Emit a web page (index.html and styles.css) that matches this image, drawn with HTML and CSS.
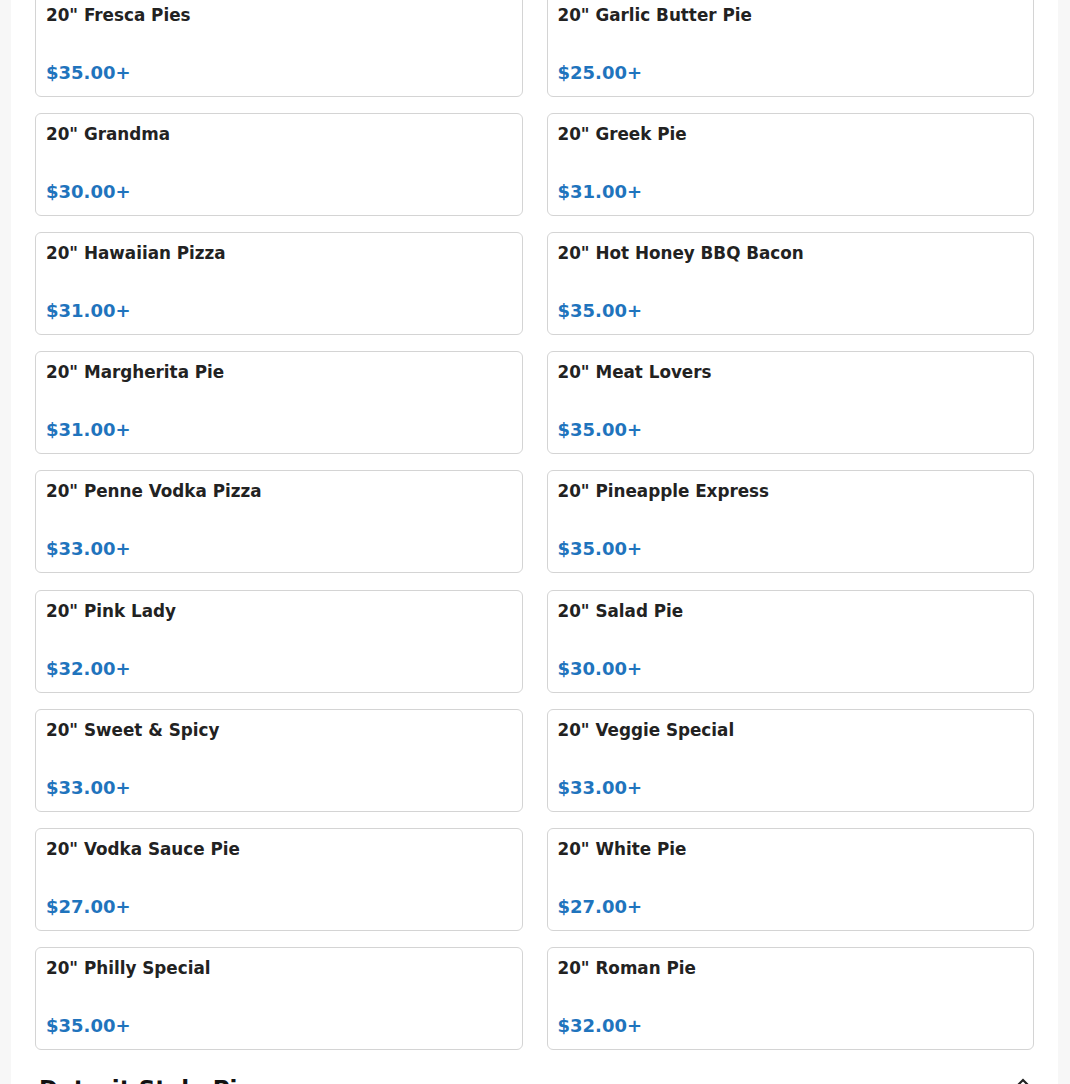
FILE: index.html
```html
<!DOCTYPE html>
<html>
<head>
<meta charset="utf-8">
<link rel="stylesheet" href="styles.css">
</head>
<body>
<div class="page">
  <div class="grid">
    <div class="card"><div class="name">20" Fresca Pies</div><div class="price">$35.00+</div></div>
    <div class="card"><div class="name">20" Garlic Butter Pie</div><div class="price">$25.00+</div></div>
    <div class="card"><div class="name">20" Grandma</div><div class="price">$30.00+</div></div>
    <div class="card"><div class="name">20" Greek Pie</div><div class="price">$31.00+</div></div>
    <div class="card"><div class="name">20" Hawaiian Pizza</div><div class="price">$31.00+</div></div>
    <div class="card"><div class="name">20" Hot Honey BBQ Bacon</div><div class="price">$35.00+</div></div>
    <div class="card"><div class="name">20" Margherita Pie</div><div class="price">$31.00+</div></div>
    <div class="card"><div class="name">20" Meat Lovers</div><div class="price">$35.00+</div></div>
    <div class="card"><div class="name">20" Penne Vodka Pizza</div><div class="price">$33.00+</div></div>
    <div class="card"><div class="name">20" Pineapple Express</div><div class="price">$35.00+</div></div>
    <div class="card"><div class="name">20" Pink Lady</div><div class="price">$32.00+</div></div>
    <div class="card"><div class="name">20" Salad Pie</div><div class="price">$30.00+</div></div>
    <div class="card"><div class="name">20" Sweet &amp; Spicy</div><div class="price">$33.00+</div></div>
    <div class="card"><div class="name">20" Veggie Special</div><div class="price">$33.00+</div></div>
    <div class="card"><div class="name">20" Vodka Sauce Pie</div><div class="price">$27.00+</div></div>
    <div class="card"><div class="name">20" White Pie</div><div class="price">$27.00+</div></div>
    <div class="card"><div class="name">20" Philly Special</div><div class="price">$35.00+</div></div>
    <div class="card"><div class="name">20" Roman Pie</div><div class="price">$32.00+</div></div>
  </div>
  <div class="section-head">
    <h2 class="section-title">Detroit Style Pies</h2>
    <svg class="chev" width="14" height="10" viewBox="0 0 14 10"><path d="M2 8 L7 3 L12 8" fill="none" stroke="#222" stroke-width="2.2"/></svg>
  </div>
</div>
</body>
</html>
```

FILE: styles.css
```css
html, body {
  margin: 0;
  padding: 0;
  background: #f7f7f7;
  font-family: "DejaVu Sans", sans-serif;
  overflow: hidden;
}
.page {
  margin: 0 12px 0 11px;
  background: #fff;
  padding: 0 24px 40px 24px;
  min-height: 1100px;
}
.grid {
  display: grid;
  grid-template-columns: 1fr 1fr;
  column-gap: 24px;
  row-gap: 16.15px;
  margin-top: -6.2px;
}
.card {
  box-sizing: border-box;
  height: 103px;
  border: 1px solid #d4d4d4;
  border-radius: 6px;
  padding: 10px 10px 13px 10px;
  display: flex;
  flex-direction: column;
  justify-content: space-between;
}
.name {
  font-size: 16.8px;
  font-weight: bold;
  line-height: 20px;
  color: #222;
}
.price {
  font-size: 18px;
  font-weight: bold;
  line-height: 20px;
  color: #1f74bd;
}
.section-head {
  display: flex;
  justify-content: space-between;
  align-items: flex-start;
  margin-top: 24px;
  padding: 0 4px 0 4px;
}
.section-title {
  margin: 0;
  font-size: 23px;
  font-weight: bold;
  color: #111;
  line-height: 30px;
}
.chev {
  display: block;
  margin-top: 3px;
}
```
